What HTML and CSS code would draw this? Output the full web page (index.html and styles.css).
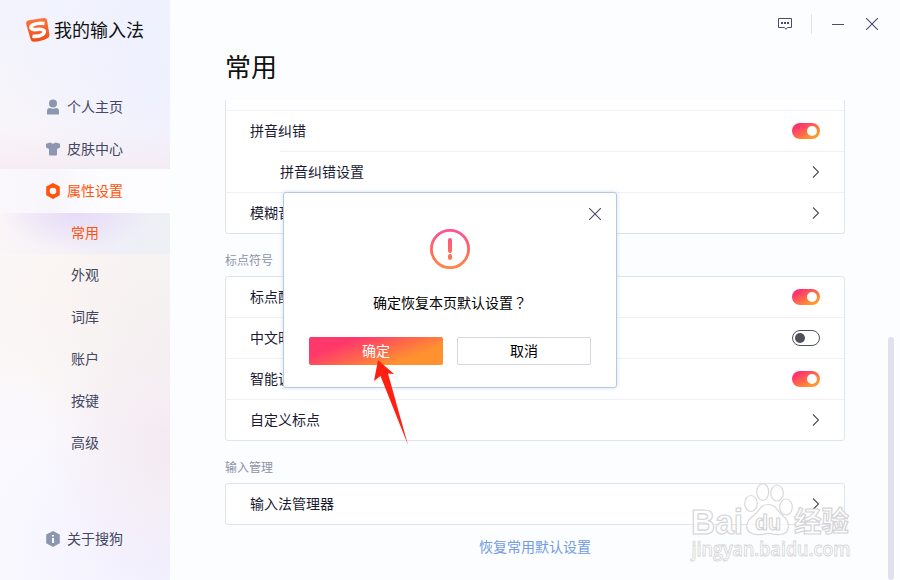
FILE: index.html
```html
<!DOCTYPE html>
<html lang="zh-CN">
<head>
<meta charset="utf-8">
<title>我的输入法</title>
<link rel="stylesheet" href="styles.css">
</head>
<body>
<div class="window">
  <aside class="sidebar">
    <div class="brand">
      <svg class="brand-logo" width="26" height="26" viewBox="0 0 26 26">
        <defs><linearGradient id="logo" x1="0" y1="0" x2="0" y2="1"><stop offset="0" stop-color="#ff7440"/><stop offset="1" stop-color="#f04b13"/></linearGradient></defs>
        <path d="M4 3.200 19 1Q21.500.8 22 3l2.400 14.500Q24.700 20.400 22.500 21.300 16 24.700 8.500 24.800 6.200 24.800 5.500 22L1.200 7Q.6 4 4 3.200Z" fill="url(#logo)"/>
        <path d="M19.500 6.500Q12.500 5.700 8 7.800C3.800 10 6.200 13.300 12 12.500 19 11.500 21.500 14.500 17.500 17.500Q13.500 20 7.500 19.200" fill="none" stroke="#fff" stroke-width="3.600"/>
      </svg>
      <span>我的输入法</span>
    </div>
    <nav class="nav">
      <a class="item"><svg class="icon" width="16" height="18" viewBox="0 0 16 18"><circle cx="8" cy="5.500" r="4"/><path d="M2 16v-3q0-3 3-3 3 1.500 6 0 3 0 3 3v3q0 .5-.5.5h-11Q2 16.500 2 16Z"/></svg><span>个人主页</span></a>
      <a class="item"><svg class="icon" width="16" height="18" viewBox="0 0 16 18"><path d="M1 3.800 5.300 2.600Q8 4.800 10.700 2.600L15 3.800V7.500L12 9V14.500Q12 15.500 11 15.500H5Q4 15.500 4 14.500V9L1 7.500Z"/></svg><span>皮肤中心</span></a>
      <a class="item selected"><svg class="icon" width="16" height="18" viewBox="0 0 16 18"><path fill-rule="evenodd" d="M8 1 14.800 4.500V13.200L8 17 1.200 13.200V4.500ZM8 5.700a3.300 3.300 0 1 0 0 6.600 3.300 3.300 0 1 0 0-6.600Z"/></svg><span>属性设置</span></a>
      <a class="item sub current"><span>常用</span></a>
      <a class="item sub"><span>外观</span></a>
      <a class="item sub"><span>词库</span></a>
      <a class="item sub"><span>账户</span></a>
      <a class="item sub"><span>按键</span></a>
      <a class="item sub"><span>高级</span></a>
    </nav>
    <a class="item about"><svg class="icon" width="16" height="18" viewBox="0 0 16 18"><path d="M8 1 14.800 4.500V13.200L8 17 1.200 13.200V4.500Z"/><path d="M7 5h2v1.500H7ZM7 8h2v5H7Z" fill="#fff"/></svg><span>关于搜狗</span></a>
  </aside>

  <main class="main">
    <header class="titlebar">
      <svg width="16" height="16" viewBox="0 0 16 16" fill="none" stroke="#4b4d68"><path d="M1.500 2.500h13v9h-4L9 13.300 7.500 11.500h-6Z"/><path d="M4 7h2M7 7h2M10 7h2" stroke-width="2"/></svg>
      <span class="divider"></span>
      <svg class="minimize" width="12" height="12" viewBox="0 0 12 12" stroke="#4b4d68"><path d="M0 6.500h12"/></svg>
      <svg width="12" height="12" viewBox="0 0 12 12" stroke="#4b4d68" stroke-width="1.100"><path d="m0 0 12 12M12 0 0 12"/></svg>
    </header>
    <h1 class="heading">常用</h1>
    <div class="viewport">
      <div class="content">
        <section class="card continued">
          <div class="row"><span>拼音纠错</span><i class="toggle on"></i></div>
          <div class="row child"><span>拼音纠错设置</span><svg class="chevron" viewBox="0 0 8 12"><path d="m1 .5 5.500 5.500L1 11.500"/></svg></div>
          <div class="row"><span>模糊音</span><svg class="chevron" viewBox="0 0 8 12"><path d="m1 .5 5.500 5.500L1 11.500"/></svg></div>
        </section>
        <h2 class="label">标点符号</h2>
        <section class="card">
          <div class="row"><span>标点配</span><i class="toggle on"></i></div>
          <div class="row"><span>中文时</span><i class="toggle"></i></div>
          <div class="row"><span>智能调</span><i class="toggle on"></i></div>
          <div class="row"><span>自定义标点</span><svg class="chevron" viewBox="0 0 8 12"><path d="m1 .5 5.500 5.500L1 11.500"/></svg></div>
        </section>
        <h2 class="label">输入管理</h2>
        <section class="card">
          <div class="row"><span>输入法管理器</span><svg class="chevron" viewBox="0 0 8 12"><path d="m1 .5 5.500 5.500L1 11.500"/></svg></div>
        </section>
        <a class="restore">恢复常用默认设置</a>
      </div>
      <div class="scrollbar"></div>
    </div>
  </main>

  <div class="dialog">
    <svg class="dialog-close" width="12" height="12" viewBox="0 0 12 12" stroke="#4b4d68" stroke-width="1.100"><path d="m0 0 12 12M12 0 0 12"/></svg>
    <svg class="alert" width="40" height="40" viewBox="0 0 40 40">
      <defs><linearGradient id="warn" gradientUnits="userSpaceOnUse" x1="0" y1="0" x2="0" y2="40"><stop offset=".1" stop-color="#fd5590"/><stop offset=".5" stop-color="#ff665f"/><stop offset="1" stop-color="#ff8744"/></linearGradient></defs>
      <circle cx="20" cy="20" r="18.600" fill="none" stroke="url(#warn)" stroke-width="2.800"/>
      <rect x="18" y="9" width="4" height="15" rx="2" fill="url(#warn)"/><rect x="18" y="25" width="4" height="6" rx="2" fill="url(#warn)"/>
    </svg>
    <p class="question">确定恢复本页默认设置<span class="mark" lang="zh-TW">？</span></p>
    <div class="actions"><button class="btn primary">确定</button><button class="btn">取消</button></div>
  </div>

  <svg class="arrow" width="40" height="90" viewBox="0 0 40 90"><path d="M8 0 24 14 18 13.500 38 85 10.500 16 4 21Z" fill="#ff2012"/></svg>

  <svg class="watermark" width="170" height="84" viewBox="0 0 170 84">
    <g class="paw">
      <ellipse cx="61" cy="20.500" rx="6.300" ry="8"/><ellipse cx="72.700" cy="9" rx="6" ry="8.300"/><ellipse cx="87" cy="10" rx="6.300" ry="8"/><ellipse cx="96" cy="24" rx="6.300" ry="8"/>
      <path d="M78 21.500C86 21.500 87 28 93 33 101 39 100 51 90 51.500 83 52 81 50 77 50.500 71 51.500 66 53 60 49.500 54 45 57 37 63 33 70 28 70 21.500 78 21.500Z"/>
    </g>
    <g class="outlined">
      <text x="1" y="50.500" font-size="35" textLength="52" lengthAdjust="spacingAndGlyphs">Bai</text>
      <text x="65" y="47" font-size="22" textLength="26" lengthAdjust="spacingAndGlyphs">du</text>
      <text x="104" y="48.500" font-size="28" textLength="55" lengthAdjust="spacingAndGlyphs">经验</text>
    </g>
    <text class="outlined url" x="1.500" y="73" font-size="19" textLength="159" lengthAdjust="spacingAndGlyphs">jingyan.baidu.com</text>
  </svg>
</div>
</body>
</html>
```

FILE: styles.css
```css
* { box-sizing: border-box; }

body {
  margin: 0;
  font-family: "Noto Sans CJK SC", sans-serif;
  font-size: 14px;
  line-height: 20px;
  color: #1a1b33;
}

.window {
  position: relative;
  display: flex;
  width: 900px;
  height: 580px;
  overflow: hidden;
  background: #fcfdff;
}

.sidebar {
  display: flex;
  flex-direction: column;
  width: 170px;
  color: #434760;
  background:
    radial-gradient(ellipse 130px 140px at 170px 450px, #f4eaf1, transparent),
    radial-gradient(ellipse 200px 150px at 170px 560px, #f1efff, transparent),
    radial-gradient(ellipse 150px 150px at 170px 330px, #f5f0f1, transparent),
    radial-gradient(ellipse 170px 130px at 100px 290px, #fbf6f2, transparent),
    radial-gradient(ellipse 210px 210px at 180px 70px, #eef0ff, transparent),
    linear-gradient(#f2f4fd, #fbf6f8 25%, #fbf7f8 60%, #faf9ff 80%, #fbfaff);
}

.brand {
  display: flex;
  align-items: center;
  height: 60px;
  margin-bottom: 26px;
  padding-left: 25px;
  gap: 3px;
  font-size: 18px;
  color: #111;
}
.brand span { padding-bottom: 2px; }

.item {
  display: flex;
  align-items: center;
  height: 42px;
  padding-left: 45px;
  gap: 6px;
}
.item span { padding-bottom: 2px; }

.nav .item:nth-child(2) {
  height: 41px;
  background: linear-gradient(transparent, rgba(244, 233, 241, .7));
}
.icon { fill: #8b97ae; }
.sub { padding-left: 71px; }

.nav .selected {
  height: 44px;
  color: #ff5409;
  background: linear-gradient(90deg, #fbf8fb, #f8f6fd 30%, #fdfdff 60%);
}
.selected .icon { fill: #ff5409; }

.nav .current {
  height: 41px;
  color: #ff5409;
  background:
    radial-gradient(ellipse 75px 38px at 75px 0, rgba(226, 210, 248, .7), transparent),
    linear-gradient(90deg, #fbf5f7, #f0eff8 60%, #edf0f5);
}
.current span { padding-bottom: 3px; }

.about { margin-top: auto; margin-bottom: 20px; }

.main {
  flex: 1;
  display: flex;
  flex-direction: column;
}

.titlebar {
  display: flex;
  align-items: center;
  justify-content: flex-end;
  height: 48px;
  padding-right: 22px;
}
.divider { width: 1px; height: 20px; margin: 0 20px 0 18px; background: #e3e4ec; }
.minimize { margin-right: 22px; }

.heading {
  height: 52px;
  margin: 0;
  padding-left: 55px;
  font-size: 26px;
  font-weight: 400;
  line-height: 36px;
  color: #111;
}

.viewport { flex: 1; display: flex; }
.content { width: 620px; margin-left: 55px; }

.card {
  border: 1px solid #e1e4ec;
  border-radius: 3px;
  background: #fff;
}
.continued {
  padding-top: 10px;
  border-top: 0;
  border-radius: 0 0 3px 3px;
}

.row {
  display: flex;
  align-items: center;
  justify-content: space-between;
  height: 41px;
  padding: 0 24px;
  border-top: 1px solid #f0f1f5;
}
.row span { padding-bottom: 2px; }
.card:not(.continued) .row:first-child { height: 40px; border-top: 0; }
.child { margin-left: 54px; padding-left: 0; }

.label {
  height: 42px;
  margin: 0;
  padding-top: 6px;
  font-size: 12px;
  font-weight: 400;
  line-height: 40px;
  color: #8d93a8;
}

.toggle {
  display: flex;
  align-items: center;
  width: 28px;
  height: 16px;
  padding: 0 2px;
  border: 1px solid #4e515b;
  border-radius: 8px;
}
.toggle::before {
  content: "";
  width: 10px;
  height: 10px;
  border-radius: 50%;
  background: #4e515b;
}
.toggle.on {
  justify-content: flex-end;
  padding: 0 3px;
  border: 0;
  background: linear-gradient(150deg, #ff3370 20%, #ff982b 80%);
}
.toggle.on::before { background: #fff; }

.chevron {
  width: 8px;
  height: 12px;
  fill: none;
  stroke: #4d4e57;
  stroke-width: 1.1;
}

.restore {
  display: block;
  padding-top: 11px;
  text-align: center;
  color: #719be4;
}

.scrollbar {
  width: 6px;
  height: 243px;
  margin: 237px 0 0 43px;
  border-radius: 3px;
  background: #dfe1ee;
}

.dialog {
  position: absolute;
  left: 283px;
  top: 192px;
  display: flex;
  flex-direction: column;
  align-items: center;
  width: 334px;
  height: 196px;
  padding: 15px 14px 22px;
  border: 1px solid #b6c9e1;
  border-radius: 3px;
  background: #fff;
  box-shadow: 0 0 4px rgba(120, 160, 210, .35);
  color: #000;
}
.dialog-close { align-self: flex-end; margin-right: 1px; }
.alert { margin-top: 9px; }
.question { margin: 23px 0 0; }
.mark { font-family: "Noto Sans CJK TC", sans-serif; }
.actions { display: flex; gap: 14px; margin-top: auto; }

.btn {
  width: 134px;
  height: 28px;
  padding: 0 0 2px;
  border: 1px solid #d5d6de;
  border-radius: 2px;
  background: #fff;
  font: inherit;
  color: #000;
}
.primary {
  border: 0;
  background: linear-gradient(160deg, #ff386c 25%, #ff922e 75%);
  color: #fff;
}

.arrow { position: absolute; left: 370px; top: 360px; }

.watermark { position: absolute; left: 690px; top: 483px; overflow: visible; }
.paw {
  fill: #fff;
  fill-opacity: .7;
  stroke: #d9d9da;
  stroke-width: 1.2;
}
.outlined {
  font-family: "Liberation Sans", "Noto Sans CJK SC", sans-serif;
  font-weight: 700;
  fill: #fff;
  fill-opacity: .8;
  stroke: #d4d4d6;
  stroke-width: 1.2;
}
.url {
  font-family: "Open Sans", sans-serif;
  font-weight: 600;
  stroke-width: .8;
}
```
